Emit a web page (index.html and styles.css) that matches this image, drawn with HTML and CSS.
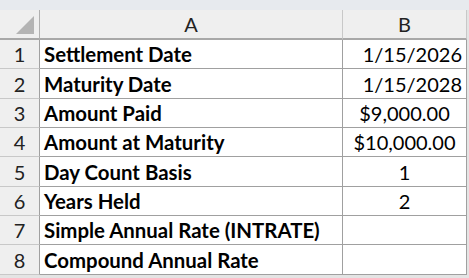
FILE: index.html
```html
<!DOCTYPE html>
<html>
<head>
<meta charset="utf-8">
<link rel="stylesheet" href="styles.css">
</head>
<body>
<div class="topbar"></div>
<div class="sheet">
  <div class="corner"><span class="tri"></span></div>
  <div class="colhead">A</div>
  <div class="colhead">B</div>

  <div class="rowhead">1</div><div class="cell label">Settlement Date</div><div class="cell right">1/15/2026</div>
  <div class="rowhead">2</div><div class="cell label">Maturity Date</div><div class="cell right">1/15/2028</div>
  <div class="rowhead">3</div><div class="cell label">Amount Paid</div><div class="cell center">$9,000.00</div>
  <div class="rowhead">4</div><div class="cell label">Amount at Maturity</div><div class="cell center">$10,000.00</div>
  <div class="rowhead">5</div><div class="cell label">Day Count Basis</div><div class="cell center">1</div>
  <div class="rowhead">6</div><div class="cell label">Years Held</div><div class="cell center">2</div>
  <div class="rowhead">7</div><div class="cell label">Simple Annual Rate (INTRATE)</div><div class="cell"></div>
  <div class="rowhead">8</div><div class="cell label">Compound Annual Rate</div><div class="cell"></div>
</div>
</body>
</html>
```
FILE: styles.css
```css
html, body {
  margin: 0;
  padding: 0;
  background: #e4e4e4;
  width: 469px;
  height: 278px;
  overflow: hidden;
}
.topbar {
  height: 10px;
  background: #e7eaee;
}
.sheet {
  display: grid;
  grid-template-columns: 40px 303px 124px;
  grid-template-rows: 30px 29px 30px 29px 29px 30px 29px 29px 30px;
  font-family: Lato, "Open Sans", sans-serif;
  font-size: 20px;
  color: #000;
  background: #fff;
  width: 467px;
}
.corner, .colhead, .rowhead {
  background: #efefef;
  box-sizing: border-box;
  color: #222;
}
.corner {
  border-right: 1px solid #b0b0b0;
  border-bottom: 2px solid #a8a8a8;
  position: relative;
}
.tri {
  position: absolute;
  left: 16px;
  top: 6px;
  width: 0;
  height: 0;
  border-left: 18px solid transparent;
  border-bottom: 18px solid #b4b4b4;
}
.colhead {
  border-right: 1px solid #c8c8c8;
  border-bottom: 2px solid #a8a8a8;
  display: flex;
  align-items: center;
  justify-content: center;
}
.rowhead {
  border-right: 1px solid #a0a0a0;
  border-bottom: 1px solid #c8c8c8;
  display: flex;
  align-items: center;
  justify-content: center;
}
.cell {
  box-sizing: border-box;
  border-right: 1px solid #a0a0a0;
  border-bottom: 1px solid #a0a0a0;
  display: flex;
  align-items: center;
  padding: 0 4px;
  white-space: nowrap;
}
.label {
  font-weight: bold;
  font-size: 20.4px;
}
.right {
  justify-content: flex-end;
}
.center {
  justify-content: center;
}
```
